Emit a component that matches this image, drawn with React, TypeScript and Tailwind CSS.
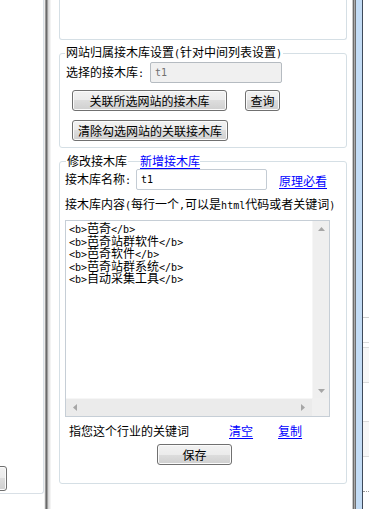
import React from "react";

const MONO = "font-['DejaVu_Sans_Mono',monospace] text-[10px]";

function Txt({ s }: { s: string }) {
  const parts = s.match(/[\x00-\x7f]+|[^\x00-\x7f]+/g) ?? [];
  return (
    <>
      {parts.map((p, i) =>
        /^[\x00-\x7f]/.test(p) ? (
          <span key={i} className={`${MONO} whitespace-pre`}>
            {p}
          </span>
        ) : (
          <span key={i}>{p}</span>
        )
      )}
    </>
  );
}

const WinButton: React.FC<{ label: string; className?: string }> = ({ label, className }) => (
  <button
    className={`flex h-[21px] shrink-0 items-center justify-center rounded-[3px] border border-[#707070] bg-[linear-gradient(#f2f2f2,#ebebeb_50%,#dddddd_50%,#cfcfcf)] text-[12px] leading-[14px] text-black shadow-[inset_0_0_0_1px_#fbfbfb] ${className ?? ""}`}
  >
    {label}
  </button>
);

const Link: React.FC<{ children: React.ReactNode; className?: string }> = ({ children, className }) => (
  <a className={`cursor-pointer text-[#0000ff] underline underline-offset-[2px] ${className ?? ""}`}>{children}</a>
);

const Arrow: React.FC<{ dir: "up" | "down" | "left" | "right" }> = ({ dir }) => {
  const pts = {
    up: "0,4 7,4 3.5,0",
    down: "0,0 7,0 3.5,4",
    left: "4,0 4,7 0,3.5",
    right: "0,0 0,7 4,3.5",
  }[dir];
  const vertical = dir === "up" || dir === "down";
  return (
    <svg width={vertical ? 7 : 4} height={vertical ? 4 : 7} viewBox={vertical ? "0 0 7 4" : "0 0 4 7"}>
      <polygon points={pts} fill="#a6a6a6" />
    </svg>
  );
};

const lines = ["<b>芭奇</b>", "<b>芭奇站群软件</b>", "<b>芭奇软件</b>", "<b>芭奇站群系统</b>", "<b>自动采集工具</b>"];

export default function App() {
  return (
    <div className="flex h-[509px] w-[369px] overflow-hidden bg-white font-['Noto_Sans_CJK_SC',sans-serif] text-[12px] text-black">
      {/* left panel */}
      <div className="flex h-[494px] w-[44px] shrink-0 flex-col justify-end rounded-br-[3px] border-r border-b border-[#d9e0e6] pb-[2px]">
        <WinButton label="" className="-ml-[70px] h-[25px] w-[77px]" />
      </div>

      {/* left splitter */}
      <div className="flex h-full shrink-0">
        <div className="w-px bg-[#ececec]" />
        <div className="w-px bg-[#9a9a9a]" />
        <div className="w-px bg-[#6a6a6a]" />
        <div className="w-px bg-[#a0a0a0]" />
        <div className="w-px bg-[#d8d8d8]" />
        <div className="w-px bg-[#e6e6e6]" />
        <div className="w-px bg-[#f3f3f3]" />
      </div>

      {/* center */}
      <div className="flex w-[301px] shrink-0 flex-col bg-white">
        <div className="ml-[8px] h-[40px] w-[288px] rounded-b-[3px] border border-t-0 border-[#d5dfe5]" />

        <fieldset className="ml-[8px] mt-[5px] w-[288px] rounded-[3px] border border-[#d5dfe5] pb-[6px]">
          <legend className="ml-[5px] px-[1px] leading-[14px]">
            <Txt s="网站归属接木库设置(针对中间列表设置)" />
          </legend>
          <div className="mt-[1px] flex h-[21px] items-center pl-[6px]">
            <span className="w-[84px] leading-[14px]">
              <Txt s="选择的接木库:" />
            </span>
            <div className="flex h-[21px] w-[132px] items-center rounded-[2px] border border-[#b5bbc1] bg-[#f0f0f0] pl-[4px] text-[#707070]">
              <Txt s="t1" />
            </div>
          </div>
          <div className="mt-[7px] flex pl-[12px]">
            <WinButton label="关联所选网站的接木库" className="w-[155px]" />
            <WinButton label="查询" className="ml-[18px] w-[35px]" />
          </div>
          <div className="mt-[9px] flex pl-[12px]">
            <WinButton label="清除勾选网站的关联接木库" className="w-[156px]" />
          </div>
        </fieldset>

        <fieldset className="ml-[8px] mt-[6px] w-[288px] rounded-[3px] border border-[#d5dfe5] pb-[18px]">
          <legend className="ml-[6px] flex items-center leading-[14px]">
            <span className="bg-white px-[1px]">修改接木库</span>
            <span className="h-px w-[12px] bg-[#d5dfe5]" />
            <Link className="bg-white">新增接木库</Link>
          </legend>

          <div className="mt-[1px] flex h-[21px] items-center pl-[5px]">
            <span className="w-[71px] leading-[14px]">
              <Txt s="接木库名称:" />
            </span>
            <div className="flex h-[21px] w-[131px] items-center rounded-[2px] border border-[#c4ccd4] bg-white pl-[4px] text-black">
              <Txt s="t1" />
            </div>
            <Link className="ml-[12px] mt-[3px] leading-[14px]">原理必看</Link>
          </div>

          <div className="mt-[7px] pl-[5px] leading-[14px]">
            <Txt s="接木库内容(每行一个,可以是html代码或者关键词)" />
          </div>

          <div className="ml-[5px] mt-[7px] flex h-[197px] w-[265px] flex-col border border-[#c6ced6] bg-white">
            <div className="flex min-h-0 flex-1">
              <div className="flex-1 pl-[3px] pt-[1px] leading-[12.5px]">
                {lines.map((l) => (
                  <div key={l} className="h-[12.5px] whitespace-nowrap">
                    <Txt s={l} />
                  </div>
                ))}
              </div>
              <div className="flex w-[17px] flex-col items-center justify-between border-l border-[#f6f6f6] bg-[#efefef] pb-[5px] pt-[6px]">
                <Arrow dir="up" />
                <Arrow dir="down" />
              </div>
            </div>
            <div className="flex h-[18px]">
              <div className="flex flex-1 items-center justify-between border-t border-[#f6f6f6] bg-[#ebebeb] px-[7px]">
                <Arrow dir="left" />
                <Arrow dir="right" />
              </div>
              <div className="w-[17px] bg-[#f0f0f0]" />
            </div>
          </div>

          <div className="mt-[7px] flex pl-[9px] leading-[14px]">
            <span>指您这个行业的关键词</span>
            <Link className="ml-[40px]">清空</Link>
            <Link className="ml-[25px]">复制</Link>
          </div>

          <div className="mt-[6px] flex pl-[97px]">
            <WinButton label="保存" className="w-[75px]" />
          </div>
        </fieldset>
      </div>

      {/* right splitter */}
      <div className="flex h-full shrink-0">
        <div className="w-px bg-[#c8c8c8]" />
        <div className="w-px bg-[#6d6d6d]" />
        <div className="w-px bg-[#a8a8a8]" />
        <div className="w-px bg-[#6d6d6d]" />
        <div className="w-[6px] bg-[#c3dcf5]" />
        <div className="w-px bg-[#3f4a5a]" />
      </div>

      {/* right panel */}
      <div className="flex w-[6px] shrink-0 flex-col">
        <div className="mt-[317px] h-px bg-[#d0d0d0]" />
        <div className="mt-[24px] h-px bg-[#dcdcdc]" />
        <div className="mt-[4px] h-[36px] border-y border-[#dcdcdc] bg-[#f7f7f7]" />
        <div className="mt-[38px] h-[36px] border-y border-[#dcdcdc] bg-[#f7f7f7]" />
        <div className="mt-[34px] h-px border-t border-dotted border-[#999999]" />
      </div>
    </div>
  );
}
